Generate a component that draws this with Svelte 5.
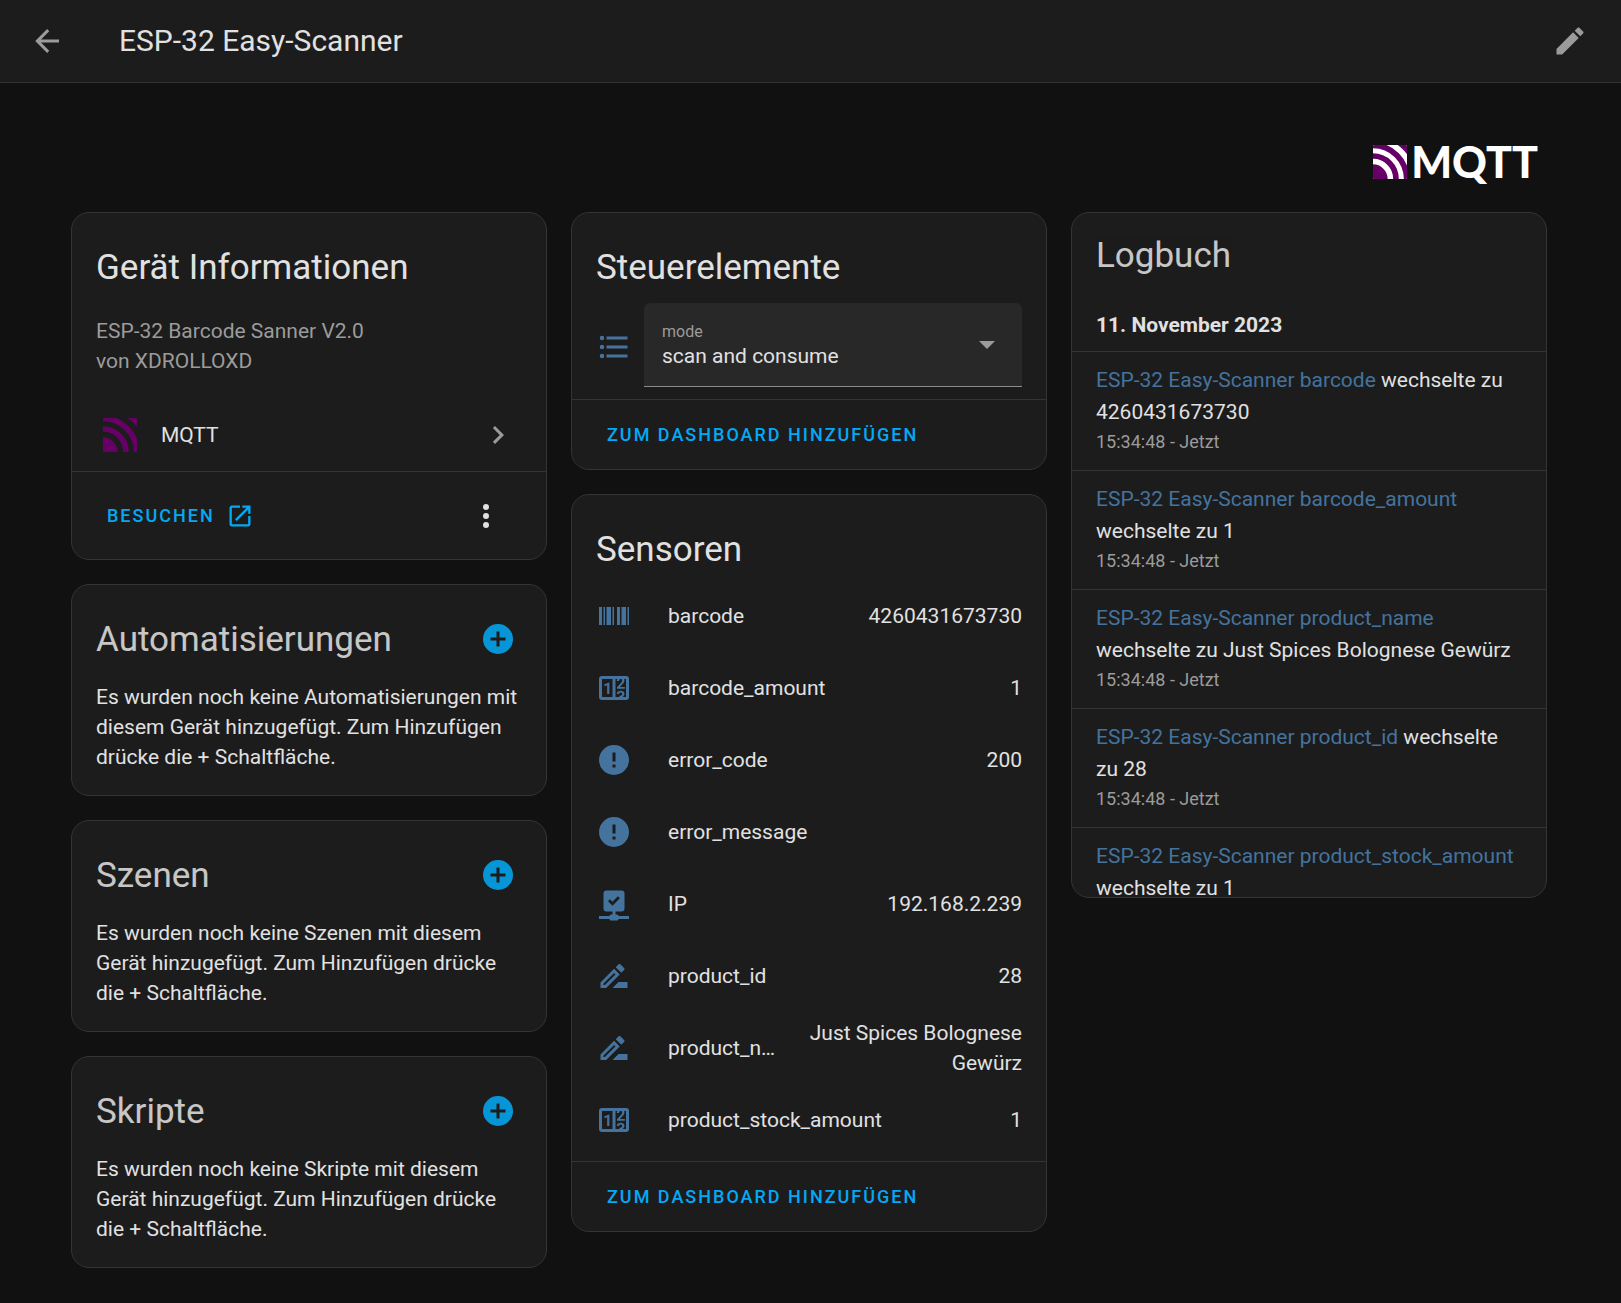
<script>
  const icons = {
    back: 'M20,11V13H8L13.5,18.5L12.08,19.92L4.16,12L12.08,4.08L13.5,5.5L8,11H20Z',
    pencil:
      'M20.71,7.04C21.1,6.65 21.1,6 20.71,5.63L18.37,3.29C18,2.9 17.35,2.9 16.96,3.29L15.12,5.12L18.87,8.87M3,17.25V21H6.75L17.81,9.93L14.06,6.18L3,17.25Z',
    chevron: 'M8.59,16.58L13.17,12L8.59,7.41L10,6L16,12L10,18L8.59,16.58Z',
    open: 'M14,3V5H17.59L7.76,14.83L9.17,16.24L19,6.41V10H21V3M19,19H5V5H12V3H5C3.89,3 3,3.9 3,5V19A2,2 0 0,0 5,21H19A2,2 0 0,0 21,19V12H19V19Z',
    dots: 'M12,16A2,2 0 0,1 14,18A2,2 0 0,1 12,20A2,2 0 0,1 10,18A2,2 0 0,1 12,16M12,10A2,2 0 0,1 14,12A2,2 0 0,1 12,14A2,2 0 0,1 10,12A2,2 0 0,1 12,10M12,4A2,2 0 0,1 14,6A2,2 0 0,1 12,8A2,2 0 0,1 10,6A2,2 0 0,1 12,4Z',
    plus: 'M17,13H13V17H11V13H7V11H11V7H13V11H17M12,2A10,10 0 0,0 2,12A10,10 0 0,0 12,22A10,10 0 0,0 22,12A10,10 0 0,0 12,2Z',
    list: 'M7,5H21V7H7V5M7,13V11H21V13H7M4,4.5A1.5,1.5 0 0,1 5.5,6A1.5,1.5 0 0,1 4,7.5A1.5,1.5 0 0,1 2.5,6A1.5,1.5 0 0,1 4,4.5M4,10.5A1.5,1.5 0 0,1 5.5,12A1.5,1.5 0 0,1 4,13.5A1.5,1.5 0 0,1 2.5,12A1.5,1.5 0 0,1 4,10.5M7,19V17H21V19H7M4,16.5A1.5,1.5 0 0,1 5.5,18A1.5,1.5 0 0,1 4,19.5A1.5,1.5 0 0,1 2.5,18A1.5,1.5 0 0,1 4,16.5Z',
    barcode:
      'M2,6H4V18H2V6M5,6H6V18H5V6M7,6H10V18H7V6M11,6H12V18H11V6M14,6H16V18H14V6M17,6H20V18H17V6M21,6H22V18H21V6Z',
    counter:
      'M4,4H20A2,2 0 0,1 22,6V18A2,2 0 0,1 20,20H4A2,2 0 0,1 2,18V6A2,2 0 0,1 4,4M4,6V18H11V6H4M20,18V6H18.76C19,6.54 18.95,7.07 18.95,7.13C18.88,7.8 18.41,8.5 18.24,8.75L15.91,11.3L19.23,11.28L19.24,12.5L14.04,12.47L14,11.47C14,11.47 17.05,8.24 17.2,7.95C17.34,7.67 17.91,6 16.5,6C15.27,6.05 15.41,7.3 15.41,7.3L13.87,7.31C13.87,7.31 13.88,6.65 14.25,6H13V18H15.58L15.57,17.14L16.54,17.13C16.54,17.13 17.45,16.97 17.46,16.08C17.5,15.08 16.65,15.08 16.5,15.08C16.37,15.08 15.43,15.13 15.43,15.95H13.91C13.91,15.95 13.95,13.89 16.5,13.89C19.1,13.89 18.96,15.91 18.96,15.91C18.96,15.91 19,17.16 17.85,17.63L18.37,18H20M8.92,16H7.42V10.2L5.62,10.76V9.53L8.76,8.41H8.92V16Z',
    alert:
      'M13,13H11V7H13M13,17H11V15H13M12,2A10,10 0 0,0 2,12A10,10 0 0,0 12,22A10,10 0 0,0 22,12A10,10 0 0,0 12,2Z',
    network:
      'M15,20A1,1 0 0,0 14,19H13V17H17A2,2 0 0,0 19,15V5A2,2 0 0,0 17,3H7A2,2 0 0,0 5,5V15A2,2 0 0,0 7,17H11V19H10A1,1 0 0,0 9,20H2V22H9A1,1 0 0,0 10,23H14A1,1 0 0,0 15,22H22V20H15M11,13.1L8,10.1L9.3,8.8L11,10.5L14.6,6.9L15.9,8.2L11,13.1Z',
    rename:
      'M15,16L11,20H21V16H15M12.06,7.19L3,16.25V20H6.75L15.81,10.94L12.06,7.19M5.92,18H5V17.08L12.06,10.02L12.98,10.94L5.92,18M18.71,8.04C19.1,7.65 19.1,7 18.71,6.63L16.37,4.29C16.17,4.09 15.92,4 15.66,4C15.41,4 15.15,4.1 14.96,4.29L13.13,6.12L16.88,9.87L18.71,8.04Z',
  };

  const emptyCards = [
    { title: 'Automatisierungen' },
    { title: 'Szenen' },
    { title: 'Skripte' },
  ];

  const sensors = [
    { icon: 'barcode', name: 'barcode', value: '4260431673730' },
    { icon: 'counter', name: 'barcode_amount', value: '1' },
    { icon: 'alert', name: 'error_code', value: '200' },
    { icon: 'alert', name: 'error_message', value: '' },
    { icon: 'network', name: 'IP', value: '192.168.2.239' },
    { icon: 'rename', name: 'product_id', value: '28' },
    { icon: 'rename', name: 'product_name', value: 'Just Spices Bolognese Gewürz' },
    { icon: 'counter', name: 'product_stock_amount', value: '1' },
  ];

  const log = [
    { entity: 'barcode', state: '4260431673730' },
    { entity: 'barcode_amount', state: '1' },
    { entity: 'product_name', state: 'Just Spices Bolognese Gewürz' },
    { entity: 'product_id', state: '28' },
    { entity: 'product_stock_amount', state: '1' },
  ];

  let mode = $state('scan and consume');
</script>

{#snippet icon(name)}
  <svg class="icon" viewBox="0 0 24 24" aria-hidden="true"><path d={icons[name]} /></svg>
{/snippet}

{#snippet mqttMark()}
  <svg class="mark" viewBox="0 0 102 102" aria-hidden="true">
    <clipPath id="mark-clip"><rect width="102" height="102" rx="4" /></clipPath>
    <g clip-path="url(#mark-clip)">
      <rect class="gap" width="102" height="102" />
      <circle class="solid" cx="0" cy="102" r="44" />
      <circle class="ring" cx="0" cy="102" r="69" />
      <circle class="ring" cx="0" cy="102" r="101" />
      <circle class="outer" cx="0" cy="102" r="146" />
    </g>
  </svg>
{/snippet}

<header>
  <button class="icon-button" aria-label="Zurück">{@render icon('back')}</button>
  <h1>ESP-32 Easy-Scanner</h1>
  <button class="icon-button" aria-label="Bearbeiten">{@render icon('pencil')}</button>
</header>

<main>
  <div class="brand">
    {@render mqttMark()}
    <span>MQTT</span>
  </div>

  <div class="columns">
    <div class="column">
      <section class="card">
        <h2>Gerät Informationen</h2>
        <p class="device">ESP-32 Barcode Sanner V2.0<br />von XDROLLOXD</p>
        <a class="integration" href="#mqtt">
          {@render mqttMark()}
          <span>MQTT</span>
          {@render icon('chevron')}
        </a>
        <div class="actions tall">
          <a class="action" href="#besuchen">BESUCHEN {@render icon('open')}</a>
          <button class="icon-button" aria-label="Menü">{@render icon('dots')}</button>
        </div>
      </section>

      {#each emptyCards as card}
        <section class="card">
          <div class="title-row">
            <h2>{card.title}</h2>
            <button class="icon-button add" aria-label="{card.title} hinzufügen">{@render icon('plus')}</button>
          </div>
          <p class="empty">
            Es wurden noch keine {card.title} mit diesem Gerät hinzugefügt. Zum Hinzufügen drücke die + Schaltfläche.
          </p>
        </section>
      {/each}
    </div>

    <div class="column">
      <section class="card">
        <h2>Steuerelemente</h2>
        <div class="control">
          <div class="control-icon">{@render icon('list')}</div>
          <div class="field">
            <label for="mode">mode</label>
            <select id="mode" bind:value={mode}>
              <option>scan and consume</option>
            </select>
            <svg class="arrow" viewBox="0 0 16 8" aria-hidden="true"><path d="M0,0H16L8,8Z" /></svg>
          </div>
        </div>
        <div class="actions">
          <button class="action">ZUM DASHBOARD HINZUFÜGEN</button>
        </div>
      </section>

      <section class="card">
        <h2>Sensoren</h2>
        <ul class="sensors">
          {#each sensors as sensor}
            <li>
              {@render icon(sensor.icon)}
              <span class="name">{sensor.name}</span>
              <span class="value">{sensor.value}</span>
            </li>
          {/each}
        </ul>
        <div class="actions">
          <button class="action">ZUM DASHBOARD HINZUFÜGEN</button>
        </div>
      </section>
    </div>

    <div class="column">
      <section class="card logbook">
        <h2>Logbuch</h2>
        <h3>11. November 2023</h3>
        <ul>
          {#each log as entry}
            <li>
              <p><a href="#{entry.entity}">ESP-32 Easy-Scanner {entry.entity}</a> wechselte zu {entry.state}</p>
              <time>15:34:48 - Jetzt</time>
            </li>
          {/each}
        </ul>
      </section>
    </div>
  </div>
</main>

<style>
  :global(body) {
    margin: 0;
    background: #111111;
    color: #e1e1e1;
    font-family: Roboto, 'Noto Sans', sans-serif;
    font-size: 21px;
    line-height: 30px;
  }

  h1,
  h2,
  h3,
  p,
  ul {
    margin: 0;
    padding: 0;
    font-weight: 400;
    list-style: none;
  }

  a {
    color: inherit;
    text-decoration: none;
  }

  button {
    padding: 0;
    border: 0;
    background: none;
    color: inherit;
    font: inherit;
    cursor: pointer;
  }

  .icon {
    display: block;
    flex: none;
    width: 36px;
    height: 36px;
    fill: currentColor;
  }

  .icon-button {
    flex: none;
  }

  header {
    display: flex;
    align-items: center;
    box-sizing: border-box;
    height: 83px;
    padding: 0 33px 0 29px;
    background: #1c1c1c;
    border-bottom: 1px solid #343434;
  }

  header .icon-button {
    color: #9b9b9b;
  }

  h1 {
    flex: 1;
    margin-left: 54px;
    font-size: 30px;
    line-height: 36px;
  }

  main {
    padding: 0 74px 35px 71px;
  }

  .brand {
    display: flex;
    align-items: center;
    justify-content: flex-end;
    gap: 4px;
    height: 129px;
    padding: 29px 9px 0 0;
    box-sizing: border-box;
    color: #ffffff;
    font-family: Lato, sans-serif;
    font-size: 43px;
    font-weight: 900;
    line-height: 48px;
  }

  .mark {
    flex: none;
    width: 34px;
    height: 34px;
  }

  .gap {
    fill: none;
  }

  .brand .gap {
    fill: #ffffff;
  }

  .solid {
    fill: #660066;
  }

  .ring,
  .outer {
    fill: none;
    stroke: #660066;
    stroke-width: 17;
  }

  .outer {
    stroke-width: 40;
  }

  .columns {
    display: grid;
    grid-template-columns: repeat(3, minmax(0, 1fr));
    align-items: start;
    gap: 24px;
  }

  .column {
    display: grid;
    gap: 24px;
  }

  .card {
    overflow: hidden;
    background: #1c1c1c;
    border: 1px solid #343434;
    border-radius: 18px;
  }

  h2 {
    padding: 31px 24px 0;
    font-size: 35px;
    line-height: 48px;
  }

  .device {
    padding: 24px 24px 0;
    color: #9b9b9b;
  }

  .integration {
    display: flex;
    align-items: center;
    height: 72px;
    margin-top: 23px;
    padding: 0 30px 0 31px;
  }

  .integration span {
    flex: 1;
    margin-left: 24px;
  }

  .integration .icon {
    color: #9b9b9b;
  }

  .actions {
    display: flex;
    align-items: center;
    justify-content: space-between;
    height: 69px;
    padding: 0 42px 0 35px;
    border-top: 1px solid #343434;
  }

  .actions.tall {
    height: 87px;
  }

  .action {
    display: flex;
    align-items: center;
    gap: 11px;
    color: #03a9f4;
    font-size: 18px;
    font-weight: 500;
    letter-spacing: 2px;
  }

  .action .icon {
    width: 28px;
    height: 28px;
  }

  .title-row {
    display: flex;
    align-items: flex-end;
    justify-content: space-between;
    padding-right: 30px;
    opacity: 0.87;
  }

  .add {
    padding-bottom: 7px;
    color: #03a9f4;
  }

  .empty {
    padding: 18px 24px 23px;
  }

  .control {
    display: flex;
    align-items: flex-start;
    gap: 12px;
    padding: 11px 24px 8px;
  }

  .control-icon {
    display: flex;
    align-items: center;
    height: 88px;
    color: #44739e;
  }

  .field {
    position: relative;
    flex: 1;
  }

  .field label {
    position: absolute;
    top: 19px;
    left: 18px;
    color: #9b9b9b;
    font-size: 16px;
    line-height: 20px;
  }

  select {
    display: block;
    box-sizing: border-box;
    width: 100%;
    height: 84px;
    padding: 22px 60px 0 18px;
    appearance: none;
    border: 0;
    border-bottom: 1px solid #8c8c8c;
    border-radius: 6px 6px 0 0;
    background: #282828;
    color: inherit;
    font: inherit;
  }

  .arrow {
    position: absolute;
    top: 38px;
    right: 27px;
    width: 16px;
    height: 8px;
    fill: #9b9b9b;
    pointer-events: none;
  }

  .sensors {
    display: grid;
    gap: 12px;
    padding: 12px 24px 11px;
  }

  .sensors li {
    display: flex;
    align-items: center;
    height: 60px;
  }

  .sensors .icon {
    color: #44739e;
  }

  .name {
    flex: 1 0 112px;
    margin: 0 18px 0 36px;
    width: 112px;
    overflow: hidden;
    text-overflow: ellipsis;
    white-space: nowrap;
  }

  .value {
    text-align: right;
  }

  .logbook {
    box-sizing: border-box;
    max-height: 686px;
  }

  .logbook h2 {
    padding-top: 19px;
    opacity: 0.87;
  }

  h3 {
    padding: 30px 24px 11px;
    font-size: 21px;
    font-weight: 700;
  }

  .logbook li {
    padding: 12px 24px 15px;
    border-top: 1px solid #343434;
  }

  .logbook p {
    line-height: 32px;
  }

  .logbook a {
    color: #44739e;
  }

  time {
    display: block;
    color: #9b9b9b;
    font-size: 18px;
    line-height: 27px;
  }
</style>
